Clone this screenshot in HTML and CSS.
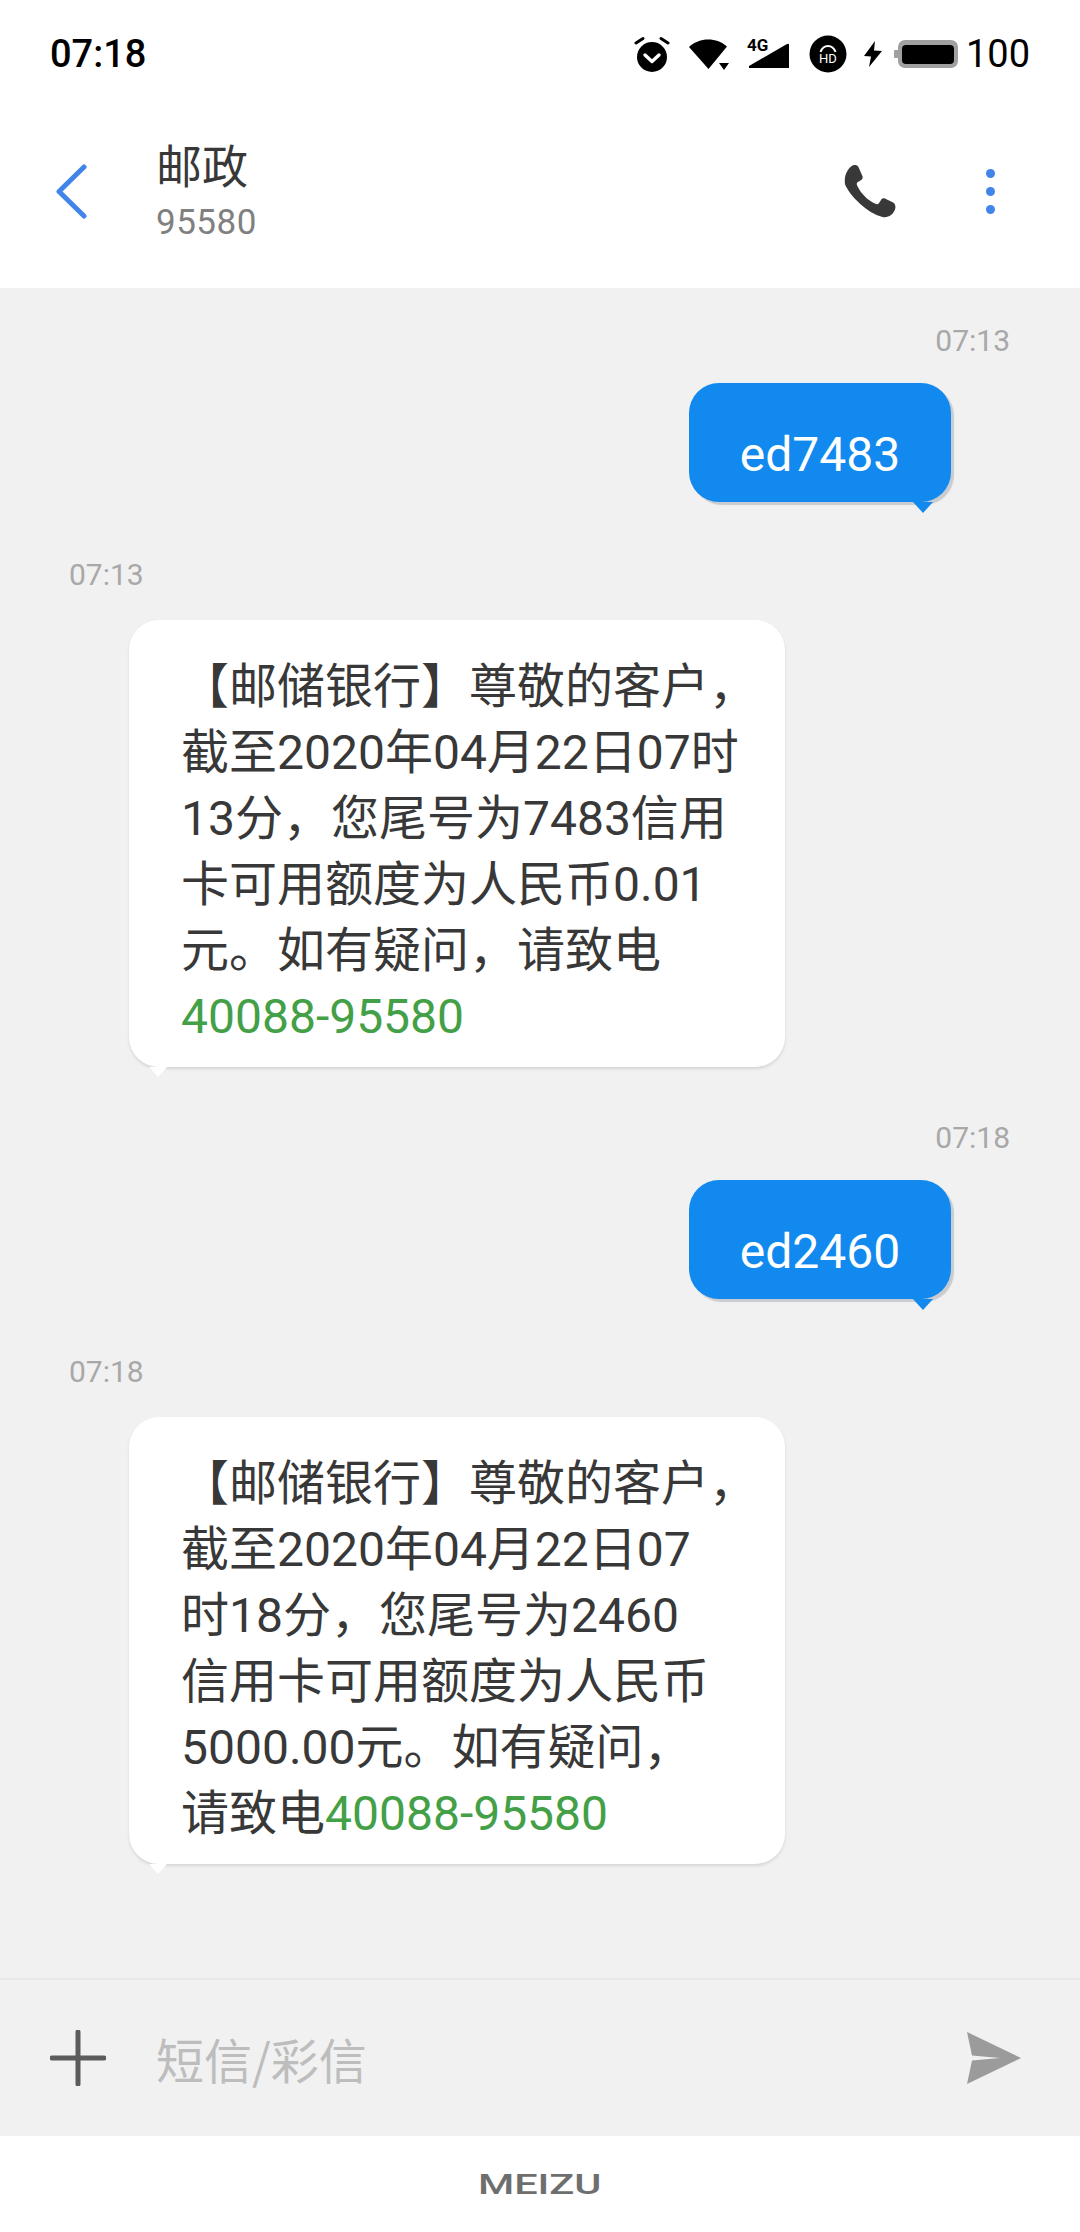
FILE: index.html
```html
<!DOCTYPE html>
<html lang="zh">
    <head>
        <meta charset="utf-8">
        <meta name="viewport" content="width=device-width, initial-scale=1.0">
        <title>邮政</title>
        <link rel="stylesheet" href="styles.css">
    </head>
    <body>
        <div id="status-bar">
            <span id="clock">07:18</span>
            <div id="status-icons">
                <svg class="alarm" width="36" height="36" viewBox="0 0 36 36"><circle cx="18" cy="21" r="15"/><path d="M9 2.500 2 7M27 2.500 34 7" fill="none" stroke="#000" stroke-width="3" stroke-linecap="round"/><path d="m11 19 7 6.500 7-6.500" fill="none" stroke="#fff" stroke-width="3.400" stroke-linecap="round" stroke-linejoin="round"/></svg>
                <svg class="wifi" width="42" height="32" viewBox="0 0 42 32"><path d="M0 9C10-1 28-1 38 8.500L19.500 31zM30 25h10l-5 7z"/></svg>
                <svg class="signal" width="44" height="40" viewBox="0 -4 44 40"><path d="M2 30v-2L40 6q2-1 2 1v23z"/><text x="0" y="13" class="net-label">4G</text></svg>
                <svg class="hd" width="38" height="38" viewBox="0 0 38 38"><circle cx="19" cy="19" r="18.500"/><path d="M11.500 17c3-8 12-8 15 0" fill="none" stroke="#fff" stroke-width="2"/><text x="19" y="28" class="hd-label">HD</text></svg>
                <svg class="bolt" width="20" height="26" viewBox="0 0 20 26"><path d="M12 0 1 15l7 .5L6 26 19 10l-8-.5z"/></svg>
                <div class="battery"><div class="battery-tip"></div><div class="battery-body"><div class="battery-fill"></div></div></div>
                <span id="battery-level">100</span>
            </div>
        </div>

        <header id="title-bar">
            <svg class="back" width="32" height="56" viewBox="0 0 32 56"><path d="M28 3 3 27.500 28 52" fill="none" stroke="#4285e8" stroke-width="5" stroke-linecap="round" stroke-linejoin="round"/></svg>
            <div id="contact">
                <h1>邮政</h1>
                <p>95580</p>
            </div>
            <svg class="call" width="52" height="54" viewBox="0 0 54 56"><path d="M8 1c3-2 6-1 7 1l4 9c1 2 0 4-2 5l-3 2c-1 1-1 2 0 4 4 8 10 14 18 18 2 1 3 1 4 0l2-3c1-2 3-3 5-2l8 4c2 1 3 4 2 7-2 6-7 9-13 8C24 50 6 32 1 20 0 11 3 5 8 1z" fill="#383838"/></svg>
            <div class="menu"><i></i><i></i><i></i></div>
        </header>

        <main id="thread">
            <div class="stamp sent-stamp">07:13</div>
            <div class="bubble sent">ed7483</div>

            <div class="stamp received-stamp">07:13</div>
            <div class="bubble received">【邮储银行】尊敬的客户，<br>截至2020年04月22日07时<br>13分，您尾号为7483信用<br>卡可用额度为人民币0.01<br>元。如有疑问，请致电<br><span class="phone">40088-95580</span></div>

            <div class="stamp sent-stamp later">07:18</div>
            <div class="bubble sent">ed2460</div>

            <div class="stamp received-stamp">07:18</div>
            <div class="bubble received">【邮储银行】尊敬的客户，<br>截至2020年04月22日07<br>时18分，您尾号为2460<br>信用卡可用额度为人民币<br>5000.00元。如有疑问，<br>请致电<span class="phone">40088-95580</span></div>
        </main>

        <div id="composer">
            <svg class="plus" width="56" height="56" viewBox="0 0 56 56"><path d="M28 2v52M2 28h52" fill="none" stroke="#5c5c5c" stroke-width="5" stroke-linecap="round"/></svg>
            <span id="placeholder">短信/彩信</span>
            <svg class="send" width="54" height="52" viewBox="0 0 54 52"><path d="M0 0 54 26 0 52 5 28.500 33 26 5 23.500z" fill="#9b9b9b"/></svg>
        </div>

        <footer id="brand"><span>MEIZU</span></footer>
    </body>
</html>
```

FILE: styles.css
```css
body {
    margin: 0;
    width: 1080px;
    height: 2232px;
    display: flex;
    flex-direction: column;
    overflow: hidden;
    background: #fff;
    font-family: Roboto, "Noto Sans CJK SC", sans-serif;
}

#status-bar {
    height: 108px;
    box-sizing: border-box;
    padding: 0 50px 0 50px;
    display: flex;
    justify-content: space-between;
    align-items: center;
}

#clock {
    font-size: 38px;
    font-weight: 500;
    color: #000;
}

#status-icons {
    display: flex;
    align-items: center;
}

.alarm { margin-right: 19px; }
.wifi { margin-right: 16px; }
.signal { margin-right: 18px; }
.hd { margin-right: 16px; }
.bolt { margin-right: 11px; }

.net-label {
    font-size: 17px;
    font-weight: 700;
}

.hd-label {
    font-size: 13px;
    fill: #fff;
    text-anchor: middle;
}

.battery {
    display: flex;
    align-items: center;
    margin-right: 8px;
}

.battery-tip {
    width: 4px;
    height: 8px;
    background: #a0a0a0;
    border-radius: 1px 0 0 1px;
}

.battery-body {
    width: 60px;
    height: 28px;
    border-radius: 7px;
    background: #a0a0a0;
    display: flex;
    align-items: center;
    justify-content: center;
}

.battery-fill {
    width: 52px;
    height: 19px;
    background: #000;
    border-radius: 4px;
}

#battery-level {
    font-size: 38px;
    color: #000;
}

#title-bar {
    height: 180px;
    box-sizing: border-box;
    display: flex;
    align-items: center;
    padding: 0 85px 0 52px;
}

.back { margin-left: 4px; margin-right: 68px; margin-bottom: 13px; }

#contact { flex: 1; margin-bottom: 17px; }

#contact h1 {
    margin: 0 0 11px;
    font-size: 46px;
    line-height: 56px;
    font-weight: 400;
    color: #383838;
    font-family: "Noto Sans CJK SC", sans-serif;
}

#contact p {
    margin: 0;
    font-size: 35px;
    line-height: 42px;
    color: #808080;
    letter-spacing: .5px;
}

.call { margin-right: 90px; margin-bottom: 13px; }

.menu {
    display: flex;
    flex-direction: column;
    gap: 9px;
    margin-bottom: 13px;
}

.menu i {
    display: block;
    width: 9px;
    height: 9px;
    border-radius: 50%;
    background: #4285e8;
}

#thread {
    flex: 1;
    background: #f1f1f1;
    display: flex;
    flex-direction: column;
    padding: 0 70px 0 69px;
}

.stamp {
    font-size: 30px;
    line-height: 34px;
    color: #a8a8a8;
}

.sent-stamp {
    align-self: flex-end;
    margin-top: 36px;
}

.sent-stamp.later {
    margin-top: 54px;
}

.received-stamp {
    align-self: flex-start;
    margin-top: 56px;
}

.bubble {
    position: relative;
    box-sizing: border-box;
    border-radius: 30px;
    font-size: 48px;
}

.sent {
    align-self: flex-end;
    width: 262px;
    height: 119px;
    margin-top: 25px;
    margin-right: 59px;
    padding-top: 42px;
    line-height: 60px;
    text-align: center;
    background: #1189ee;
    color: #fff;
    box-shadow: 3px 3px 1px #c8ccd0;
}

.sent::after {
    content: "";
    position: absolute;
    right: 18px;
    bottom: -11px;
    border: 10px solid transparent;
    border-top: 11px solid #1189ee;
    border-bottom: 0;
}

.received {
    align-self: flex-start;
    width: 656px;
    height: 447px;
    margin-top: 28px;
    margin-left: 60px;
    padding: 34px 20px 0 52px;
    line-height: 66px;
    background: #fff;
    color: #383838;
    box-shadow: 0 2px 3px #d6d6d6;
}

.received::after {
    content: "";
    position: absolute;
    left: 20px;
    bottom: -10px;
    border: 9px solid transparent;
    border-top: 10px solid #fff;
    border-bottom: 0;
}

.phone { color: #43a047; }

#composer {
    height: 158px;
    box-sizing: border-box;
    border-top: 2px solid #e8e8e8;
    background: #f1f1f1;
    display: flex;
    align-items: center;
    padding: 0 59px 0 50px;
}

.plus { margin-right: 50px; }

#placeholder {
    flex: 1;
    font-size: 48px;
    color: #bdbdbd;
    font-family: "Noto Sans CJK SC", sans-serif;
}

#brand {
    height: 96px;
    display: flex;
    align-items: center;
    justify-content: center;
    font-size: 28px;
    font-weight: 500;
    color: #6e6e6e;
}

#brand span {
    display: inline-block;
    transform: scaleX(1.48);
}
```
